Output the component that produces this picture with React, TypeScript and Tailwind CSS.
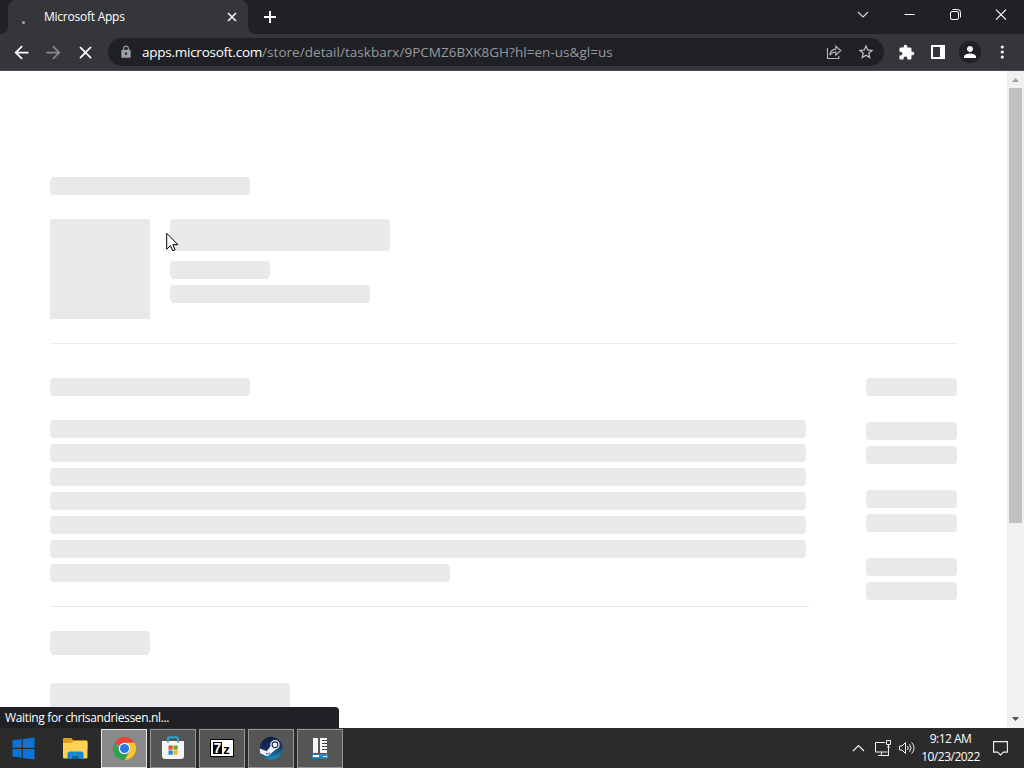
import type { ReactNode } from "react";
import { MdArrowBack, MdArrowForward, MdClose, MdExtension, MdLock, MdPerson, MdStarBorder } from "react-icons/md";

function Bone({ className }: { className: string }) {
  return <div className={`shrink-0 rounded bg-[#e9e9e9] ${className}`} />;
}

function Cell({ children, className = "" }: { children?: ReactNode; className?: string }) {
  return <div className={`flex h-full w-8 shrink-0 items-center justify-center ${className}`}>{children}</div>;
}

function TabStrip() {
  return (
    <header className="flex h-[34px] shrink-0 bg-[#202124] text-white">
      <div className="flex w-2 shrink-0 bg-[#35363a]">
        <div className="grow rounded-br-lg bg-[#202124]" />
      </div>
      <div className="flex w-60 shrink-0 items-center rounded-t-lg bg-[#35363a] pl-[14px]">
        <div className="mt-2.5 h-[3px] w-[3px] rounded-full bg-[#a4a5a8]" />
        <span className="ml-[19px] whitespace-nowrap text-[12px] tracking-[-0.24px]">Microsoft Apps</span>
        <svg className="ml-auto mr-[11px]" width="10" height="10" viewBox="0 0 10 10" stroke="#f1f1f2" strokeWidth="1.7">
          <path d="M1 1l8 8M9 1l-8 8" />
        </svg>
      </div>
      <div className="flex w-2 shrink-0 bg-[#35363a]">
        <div className="grow rounded-bl-lg bg-[#202124]" />
      </div>
      <svg className="ml-[7px] mt-[10px]" width="14" height="14" viewBox="0 0 14 14" stroke="#fff" strokeWidth="2">
        <path d="M7 1v12M1 7h12" />
      </svg>
      <div className="ml-auto flex h-[29px] items-center">
        <svg className="mr-[35px]" width="12" height="8" viewBox="0 0 12 8" fill="none" stroke="#d9d9da" strokeWidth="1.1">
          <path d="M1 1l5 5 5-5" />
        </svg>
        <svg className="mr-[35px]" width="11" height="11" viewBox="0 0 11 11" stroke="#fff">
          <path d="M.5 5.5h10" />
        </svg>
        <svg className="mr-[34px]" width="11" height="11" viewBox="0 0 11 11" fill="none" stroke="#fff">
          <rect x=".5" y="2.5" width="8" height="8" rx="1.5" />
          <path d="M2.5.5h5a3 3 0 0 1 3 3v5" />
        </svg>
        <svg className="mr-[17px]" width="12" height="12" viewBox="0 0 12 12" stroke="#fff" strokeWidth="1.2">
          <path d="M1 .7l10 10M11 .7L1 10.700" />
        </svg>
      </div>
    </header>
  );
}

function Toolbar() {
  return (
    <div className="flex h-[37px] shrink-0 items-center border-b border-[#4b4c4f] bg-[#35363a] pl-1.5 pr-1.5 text-white">
      <Cell className="pr-px"><MdArrowBack size={21} /></Cell>
      <Cell className="pr-px text-[#87888b]"><MdArrowForward size={21} /></Cell>
      <Cell className="pr-px"><MdClose size={21} /></Cell>
      <div className="ml-1.5 flex h-7 w-[776px] shrink-0 items-center rounded-full bg-[#202124] pl-[11px] pr-0.5">
        <MdLock size={14} className="mr-[9px] text-[#9aa0a6]" />
        <span className="whitespace-nowrap text-[13.5px] tracking-[0.040px] text-[#969a9f]">
          <span className="tracking-[-0.25px] text-white">apps.microsoft.com</span>/store/detail/taskbarx/9PCMZ6BXK8GH?hl=en-us&amp;gl=us
        </span>
        <div className="ml-auto flex h-full">
          <Cell>
            <svg width="16" height="16" viewBox="0 0 16 16" fill="none" stroke="#b5b7ba" strokeWidth="1.15">
              <path d="M1.5 4v10.500h11.300V12M3.800 11.200c.4-3.800 2.600-6 6-6.100V2.200l5 4.300-5 4.400V8c-2.600 0-4.500 1-6 3.200z" />
            </svg>
          </Cell>
          <Cell><MdStarBorder size={18} className="text-[#c4c6c9]" /></Cell>
        </div>
      </div>
      <Cell className="ml-1.5"><MdExtension size={17} /></Cell>
      <Cell>
        <svg width="14" height="14" viewBox="0 0 14 14">
          <path fill="#fff" fillRule="evenodd" d="M0 0h14v14H0zM2 2v10h7V2z" />
        </svg>
      </Cell>
      <Cell>
        <div className="flex h-[22px] w-[22px] items-center justify-center rounded-full bg-[#202124]">
          <MdPerson size={18} />
        </div>
      </Cell>
      <Cell>
        <svg width="4" height="14" viewBox="0 0 4 14" fill="#fff">
          <circle cx="2.300" cy="2" r="1.600" /><circle cx="2.300" cy="7" r="1.600" /><circle cx="2.300" cy="12" r="1.600" />
        </svg>
      </Cell>
    </div>
  );
}

function Skeleton() {
  return (
    <main className="h-full grow overflow-hidden bg-white pl-[50px] pr-[50px] pt-[106px]">
      <Bone className="h-[18px] w-[200px]" />
      <div className="mt-6 flex gap-5">
        <div className="h-[100px] w-[100px] bg-[#e9e9e9]" />
        <div>
          <Bone className="h-8 w-[220px]" />
          <Bone className="mt-2.5 h-[18px] w-[100px]" />
          <Bone className="mt-1.5 h-[18px] w-[200px]" />
        </div>
      </div>
      <div className="mt-6 h-px bg-[#ebebeb]" />
      <div className="mt-[34px] flex justify-between">
        <div className="w-[759px]">
          <Bone className="h-[18px] w-[200px]" />
          <div className="mt-6 flex flex-col gap-1.5 pr-[3px]">
            <Bone className="h-[18px]" />
            <Bone className="h-[18px]" />
            <Bone className="h-[18px]" />
            <Bone className="h-[18px]" />
            <Bone className="h-[18px]" />
            <Bone className="h-[18px]" />
            <Bone className="h-[18px] w-[400px]" />
          </div>
          <div className="mt-6 h-px bg-[#e9e9e9]" />
          <Bone className="mt-6 h-6 w-[100px]" />
          <Bone className="mt-7 h-10 w-60" />
        </div>
        <div className="w-[91px]">
          <Bone className="h-[18px]" />
          <Bone className="mt-[26px] h-[18px]" />
          <Bone className="mt-1.5 h-[18px]" />
          <Bone className="mt-[26px] h-[18px]" />
          <Bone className="mt-1.5 h-[18px]" />
          <Bone className="mt-[26px] h-[18px]" />
          <Bone className="mt-1.5 h-[18px]" />
        </div>
      </div>
    </main>
  );
}

function ScrollBar() {
  return (
    <div className="flex w-[17px] shrink-0 flex-col items-center bg-[#f1f1f1]">
      <svg className="shrink-0" width="17" height="17" viewBox="0 0 17 17" fill="#a3a3a3"><path d="M5 11h7L8.500 7z" /></svg>
      <div className="h-[435px] w-[13px] bg-[#c1c1c1]" />
      <svg className="mt-auto shrink-0" width="17" height="17" viewBox="0 0 17 17" fill="#505050"><path d="M5 6h7l-3.500 4z" /></svg>
    </div>
  );
}

function AppButton({ children, active = false }: { children: ReactNode; active?: boolean }) {
  return (
    <div
      className={`flex h-[39px] w-[46px] shrink-0 items-center justify-center border ${
        active ? "border-[#e6e6e6] bg-[#898989]" : "border-[#969696] bg-[#565656]"
      }`}
    >
      {children}
    </div>
  );
}

function TaskBar() {
  return (
    <footer className="flex h-10 shrink-0 items-center bg-[#2b2b2b] text-white">
      <svg className="ml-3 shrink-0" width="23" height="23" viewBox="0 0 23 23" fill="#0874dc">
        <path d="M.5 3.400l9.200-1.300v8.700H.5zM10.800 1.900L22.500.4v10.400H10.800zM.5 12h9.200v8.800L.5 19.500zM10.800 12h11.700v10.600l-11.700-1.700z" />
      </svg>
      <svg className="ml-7 shrink-0" width="25" height="24" viewBox="0 0 25 24">
        <path fill="#dfa019" d="M0 3.200Q0 2 1.200 2h7l2 2.200h13q1.300 0 1.300 1.400V12H0z" />
        <path fill="#ffd257" d="M0 7h8.500l2-2H23q1.500 0 1.500 1.500v15Q24.500 22.500 23.200 22.500H1.300Q0 22.500 0 21z" />
        <path fill="#1688ce" d="M4.500 23v-5q0-2.500 2.500-2.500h11q2.500 0 2.500 2.500v5h-4v-3h-8v3z" />
        <path fill="#0d64a8" d="M8.500 20h8v3h-8z" />
      </svg>
      <div className="ml-[13px] flex gap-[3px]">
        <AppButton active>
          <svg width="25" height="25" viewBox="0 0 48 48">
            <path fill="#ea4335" d="M24 2a22 22 0 0 1 19.100 11H24a11 11 0 0 0-9.500 5.500L5 13A22 22 0 0 1 24 2z" />
            <path fill="#fbc52b" d="M43.100 13A22 22 0 0 1 24 46l9.500-16.500A11 11 0 0 0 33.500 18.500L24 13z" />
            <path fill="#2da04b" d="M5 13l9.500 16.500A11 11 0 0 0 33.500 29.500L24 46A22 22 0 0 1 5 13z" />
            <circle cx="24" cy="24" r="11" fill="#fff" />
            <circle cx="24" cy="24" r="8.800" fill="#2878e5" />
          </svg>
        </AppButton>
        <AppButton>
          <svg width="24" height="24" viewBox="0 0 24 24">
            <path d="M7 7V3q0-1.700 1.700-1.700h6.600Q17 1.300 17 3v4" fill="none" stroke="#2aa5d6" strokeWidth="2" />
            <path fill="#f4f5f6" d="M1 5h22v15q0 3-3 3H4q-3 0-3-3z" />
            <path fill="#32a6d5" d="M6 5h2v1.500H6zM16 5h2v1.500h-2z" />
            <path fill="#e75125" d="M7.500 9.500h4.200v4.200H7.500z" />
            <path fill="#6eac1d" d="M12.500 9.500h4.200v4.200h-4.200z" />
            <path fill="#168ee0" d="M7.500 14.500h4.200v4.200H7.500z" />
            <path fill="#f2b51d" d="M12.500 14.500h4.200v4.200h-4.200z" />
          </svg>
        </AppButton>
        <AppButton>
          <div className="flex h-[18px] w-6 items-center justify-center border border-black bg-white p-0.5">
            <div className="flex h-full w-[10px] items-center justify-center bg-black font-['Liberation_Sans',sans-serif] text-[14px] font-bold leading-none text-white">7</div>
            <div className="flex h-full w-[10px] items-center justify-center bg-white pt-0.5 font-['Liberation_Sans',sans-serif] text-[13px] font-bold leading-none text-black">z</div>
          </div>
        </AppButton>
        <AppButton>
          <svg width="24" height="24" viewBox="0 0 24 24">
            <defs>
              <linearGradient id="steam" x1="0" y1="0" x2="0.200" y2="1">
                <stop offset="0" stopColor="#101d3e" />
                <stop offset="0.550" stopColor="#11305e" />
                <stop offset="1" stopColor="#168abd" />
              </linearGradient>
            </defs>
            <path fill="url(#steam)" d="M1 10A11.400 11.400 0 1 1 3 19l-2-4z" />
            <path fill="#f2f4f7" d="M.8 12.500l7 2.700 4-5.400 6 3-6.200 5a4 4 0 0 1-6 1.400L1 17z" />
            <circle cx="16" cy="8.800" r="4.700" fill="#f2f4f7" />
            <circle cx="16" cy="8.800" r="2.900" fill="none" stroke="#15294e" strokeWidth="1.100" />
            <path d="M7 17.500q3 1.500 4-.8" fill="none" stroke="#26466d" />
          </svg>
        </AppButton>
        <AppButton>
          <svg width="18" height="24" viewBox="0 0 18 24">
            <path fill="#f4f6f8" d="M2 2h5v15H2zM9 2h7v15H9z" />
            <path stroke="#3d464e" d="M11 4.500h5M11 7.500h5M11 10.500h5M11 13.500h5" />
            <path fill="#208bd2" d="M1 18h16v4.500H1z" />
            <path fill="#fff" d="M2 19h6v2H2zM12 20h4v1h-4z" />
          </svg>
        </AppButton>
      </div>
      <div className="ml-auto flex items-center">
        <svg className="mr-[10px]" width="13" height="8" viewBox="0 0 13 8" fill="none" stroke="#f2f2f2" strokeWidth="1.200">
          <path d="M1 7l5.500-5.500L12 7" />
        </svg>
        <svg className="mr-[7px]" width="17" height="17" viewBox="0 0 17 17" fill="none" stroke="#f2f2f2">
          <path d="M10 2.500H.5v9.500h12M6.500 12v3.500M3 15.500h8M11.500.500h4v4h-4zM13.500 4.500v11M11 15.500h3M12 7h3" />
        </svg>
        <svg className="mr-1" width="17" height="14" viewBox="0 0 17 14" fill="none" stroke="#f2f2f2">
          <path d="M.5 5h2.500l3.500-3.500v11L3 9H.5zM8.500 5q1.500 2 0 4M10.500 3.200q3 3.800 0 7.600M12.700 1.500q4.800 5.500 0 11" />
        </svg>
        <div className="w-[61px] whitespace-nowrap text-center text-[12px] leading-[18px] tracking-[-0.5px]">
          <div>9:12 AM</div>
          <div>10/23/2022</div>
        </div>
        <svg className="ml-3 mr-[16px]" width="15" height="16" viewBox="0 0 15 16" fill="none" stroke="#f2f2f2" strokeWidth="1.100">
          <path d="M.600 1.600h13.800v10.500h-4L7.500 15l-2.900-2.900h-4z" />
        </svg>
      </div>
    </footer>
  );
}

export default function App() {
  return (
    <div className="relative flex h-[768px] w-[1024px] flex-col overflow-hidden font-['Open_Sans','Noto_Sans',sans-serif]">
      <TabStrip />
      <Toolbar />
      <div className="flex h-[657px] shrink-0">
        <Skeleton />
        <ScrollBar />
      </div>
      <TaskBar />
      <div className="absolute bottom-10 left-0 flex h-[21px] w-[339px] items-center rounded-tr bg-[#202124] pl-[5px] text-[12px] tracking-[-0.35px] text-white">
        Waiting for chrisandriessen.nl...
      </div>
      <svg className="absolute left-[166px] top-[232px]" width="13" height="20" viewBox="0 0 13 20" fill="#fff" stroke="#000">
        <path d="M.700 1.200v16l3.700-3.600 2.400 5.200 2.300-1-2.300-5.100h5.100z" />
      </svg>
    </div>
  );
}
